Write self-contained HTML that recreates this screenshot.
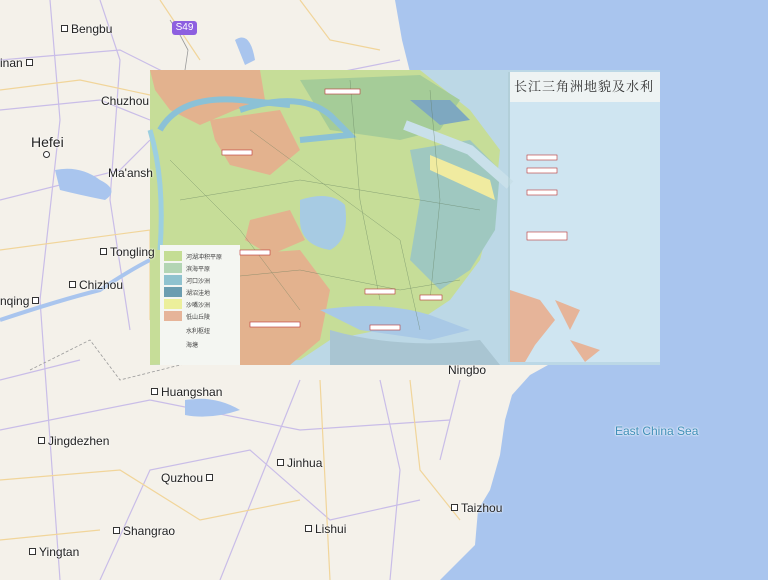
<!DOCTYPE html>
<html><head><meta charset="utf-8"><style>
html,body{margin:0;padding:0;width:768px;height:580px;overflow:hidden;background:#f4f1ea;font-family:"Liberation Sans","Noto Sans CJK SC",sans-serif}
.l{position:absolute;font-size:12px;color:#222;text-shadow:0 0 2px #fff,0 0 2px #fff}
.d{display:inline-block;width:5px;height:5px;border:1px solid #333;background:#fff;margin-right:3px;vertical-align:1px}
.lg{position:absolute;left:186px;font-size:6px;color:#444;font-family:"Noto Sans CJK SC",sans-serif}
</style></head><body>
<svg width="768" height="580" style="position:absolute;left:0;top:0">
<rect width="768" height="580" fill="#f4f1ea"/>
<path d="M395 0 L768 0 L768 580 L440 580 L460 560 L475 545 L478 510 L490 490 L500 455 L505 420 L512 395 L530 375 L548 365 L548 72 L410 72 L402 40 Z" fill="#a9c5ee"/>
<g fill="none" stroke="#c9bde8" stroke-width="1.2">
<path d="M0 60 L120 50 L200 90 L300 80 L400 60"/><path d="M0 200 L120 170 L150 140"/><path d="M50 0 L60 120 L40 300 L60 580"/>
<path d="M0 430 L150 400 L300 430 L450 420"/><path d="M100 580 L150 470 L250 450 L330 520 L420 500"/>
<path d="M220 580 L260 480 L300 380"/><path d="M380 380 L400 470 L390 580"/><path d="M460 380 L440 460"/>
<path d="M0 110 L100 100 L150 120"/><path d="M100 0 L120 60 L110 200 L130 330"/><path d="M0 380 L80 360"/>
</g>
<g fill="none" stroke="#f1d59a" stroke-width="1.2">
<path d="M0 250 L150 230 L150 320"/><path d="M0 480 L120 470 L200 520 L300 500"/><path d="M320 380 L330 580"/><path d="M410 380 L420 470 L460 520"/><path d="M160 0 L200 60"/>
<path d="M0 90 L80 80 L150 95"/><path d="M300 0 L330 40 L380 50"/><path d="M0 540 L100 530"/>
</g>
<path d="M30 370 L90 340 L120 380 L200 360" fill="none" stroke="#999" stroke-width="0.8" stroke-dasharray="3 2"/>
<path d="M55 170 Q80 165 100 180 Q120 190 105 200 Q80 195 60 190 Z" fill="#a9c5ee"/>
<path d="M235 40 Q250 30 255 60 L245 65 Z" fill="#a9c5ee"/>
<path d="M185 400 Q215 395 240 410 Q210 420 185 415 Z" fill="#a9c5ee"/>
<path d="M0 320 Q60 300 100 290 Q130 270 150 260" fill="none" stroke="#a9c5ee" stroke-width="4"/>
<path d="M170 20 L180 35 L188 50 L185 70" fill="none" stroke="#999" stroke-width="0.8"/>
<g>
<rect x="150" y="70" width="510" height="295" fill="#bcd8e6"/>
<rect x="510" y="72" width="150" height="290" fill="#cfe5f1"/>
<rect x="510" y="72" width="150" height="30" fill="#eef3f3"/>
<path d="M150 70 L420 70 L470 110 L500 150 L495 200 L480 260 L450 300 L420 320 L380 330 L330 340 L300 360 L150 365 Z" fill="#c6dd98"/>
<path d="M300 80 L420 75 L460 100 L440 130 L400 140 L330 130 Z" fill="#a5cc98"/>
<path d="M410 150 L470 140 L500 170 L495 230 L470 270 L440 290 L410 260 L420 200 Z" fill="#9fc8c0"/>
<path d="M150 70 L260 70 L265 100 L235 110 L200 125 L170 110 L155 90 Z" fill="#e3b28e"/>
<path d="M210 120 L280 110 L300 150 L270 175 L230 165 L215 140 Z" fill="#e3b28e"/>
<path d="M250 220 L290 210 L305 240 L270 255 L245 240 Z" fill="#e3b28e"/>
<path d="M230 255 L300 250 L330 290 L320 340 L290 365 L230 365 L225 300 Z" fill="#e3b28e"/>
<path d="M300 200 Q330 190 345 205 Q350 240 330 250 Q300 245 300 220 Z" fill="#a7cbe3"/>
<path d="M240 110 Q300 90 330 115 L350 135 L300 140" fill="none" stroke="#8bc1d6" stroke-width="6"/>
<path d="M160 130 Q180 95 240 100 L290 105" fill="none" stroke="#8bc1d6" stroke-width="6"/>
<path d="M150 130 Q165 180 160 250" fill="none" stroke="#9ccfe0" stroke-width="5"/>
<path d="M405 125 L470 150 L510 185" fill="none" stroke="#c9e0ea" stroke-width="10"/>
<path d="M430 155 L490 180 L495 200 L430 170 Z" fill="#f0eba0"/>
<path d="M410 100 L450 100 L470 120 L440 125 Z" fill="#7ea8c0"/>
<path d="M320 310 Q380 300 430 315 L470 330 L430 340 L360 330 Z" fill="#a9c9e6"/>
<path d="M330 330 Q400 350 480 340 L500 365 L330 365 Z" fill="#a9c5d2"/>
<path d="M510 290 L540 300 L555 320 L535 345 L525 362 L510 362 Z" fill="#e6b499"/>
<path d="M555 300 L580 310 L570 330 Z M570 340 L600 350 L585 362 Z" fill="#e6b499"/>
<g fill="none" stroke="#5e7a5a" stroke-width="0.5" opacity="0.6">
<path d="M250 130 L400 240 L420 330"/><path d="M180 200 L300 180 L420 200 L480 210"/><path d="M200 280 L300 270 L400 290 L460 280"/>
<path d="M350 80 L360 200 L380 300"/><path d="M430 90 L440 200 L430 300"/><path d="M170 160 L240 230 L300 310"/>
</g>
<rect x="160" y="245" width="80" height="120" fill="#f4f6f2"/>
<rect x="164" y="251" width="18" height="10" fill="#c4dd94"/><rect x="164" y="263" width="18" height="10" fill="#b3d5b4"/>
<rect x="164" y="275" width="18" height="10" fill="#8fc2cf"/><rect x="164" y="287" width="18" height="10" fill="#6b9db0"/>
<rect x="164" y="299" width="18" height="10" fill="#ecef9b"/><rect x="164" y="311" width="18" height="10" fill="#e6b499"/>
<line x1="509" y1="72" x2="509" y2="362" stroke="#9bb" stroke-width="0.6"/>
</g>
<g fill="#fff" stroke="#b33" stroke-width="0.6">
<rect x="325" y="89" width="35" height="5"/><rect x="222" y="150" width="30" height="5"/><rect x="240" y="250" width="30" height="5"/>
<rect x="365" y="289" width="30" height="5"/><rect x="420" y="295" width="22" height="5"/><rect x="250" y="322" width="50" height="5"/>
<rect x="370" y="325" width="30" height="5"/><rect x="527" y="155" width="30" height="5"/><rect x="527" y="168" width="30" height="5"/><rect x="527" y="190" width="30" height="5"/><rect x="527" y="232" width="40" height="8"/>
</g>
</svg>
<div class="lg" style="top:252px">河湖冲积平原</div><div class="lg" style="top:264px">滨海平原</div><div class="lg" style="top:276px">河口沙洲</div><div class="lg" style="top:288px">湖沼洼地</div><div class="lg" style="top:300px">沙嘴沙洲</div><div class="lg" style="top:312px">低山丘陵</div><div class="lg" style="top:326px">水利枢纽</div><div class="lg" style="top:340px">海塘</div>
<div class="l" style="left:514px;top:76px;font-size:13px;color:#333;font-family:'Noto Serif CJK SC',serif;letter-spacing:1px;text-shadow:none">长江三角洲地貌及水利</div>
<div class="l" style="left:61px;top:22px"><span class="d"></span>Bengbu</div>
<div class="l" style="left:0px;top:56px">inan<span class="d" style="margin-left:3px"></span></div>
<div class="l" style="left:101px;top:94px">Chuzhou</div>
<div class="l" style="left:31px;top:134px;font-size:14px">Hefei</div>
<div style="position:absolute;left:43px;top:151px;width:5px;height:5px;border:1px solid #333;border-radius:50%;background:#fff"></div>
<div class="l" style="left:108px;top:166px">Ma'ansh</div>
<div class="l" style="left:100px;top:245px"><span class="d"></span>Tongling</div>
<div class="l" style="left:69px;top:278px"><span class="d"></span>Chizhou</div>
<div class="l" style="left:0px;top:294px">nqing<span class="d" style="margin-left:3px"></span></div>
<div class="l" style="left:151px;top:385px"><span class="d"></span>Huangshan</div>
<div class="l" style="left:38px;top:434px"><span class="d"></span>Jingdezhen</div>
<div class="l" style="left:277px;top:456px"><span class="d"></span>Jinhua</div>
<div class="l" style="left:161px;top:471px">Quzhou<span class="d" style="margin-left:3px"></span></div>
<div class="l" style="left:451px;top:501px"><span class="d"></span>Taizhou</div>
<div class="l" style="left:113px;top:524px"><span class="d"></span>Shangrao</div>
<div class="l" style="left:305px;top:522px"><span class="d"></span>Lishui</div>
<div class="l" style="left:29px;top:545px"><span class="d"></span>Yingtan</div>
<div class="l" style="left:448px;top:363px">Ningbo</div>
<div class="l" style="left:615px;top:424px;color:#3f8fb8">East China Sea</div>
<div style="position:absolute;left:172px;top:21px;width:25px;height:14px;background:#8d5fe0;border-radius:3px;color:#fff;font-size:10px;text-align:center;line-height:14px">S49</div>
</body></html>
